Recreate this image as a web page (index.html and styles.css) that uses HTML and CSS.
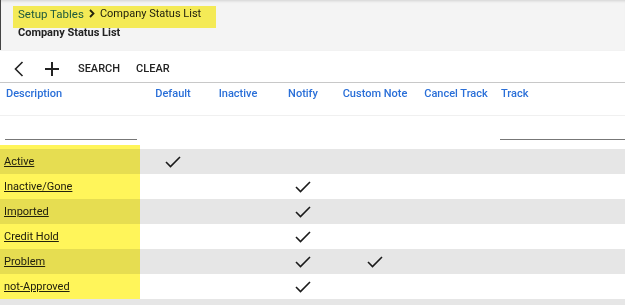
FILE: index.html
```html
<!DOCTYPE html>
<html lang="en">
<head>
    <meta charset="UTF-8">
    <meta name="viewport" content="width=device-width, initial-scale=1.0">
    <title>Company Status List</title>
    <link rel="stylesheet" href="styles.css">
</head>
<body>
    <div class="topbar">
        <div class="crumbs">
            <a href="#" class="crumb-link">Setup Tables</a>
            <svg class="crumb-sep" width="6" height="9" viewBox="0 0 6 9"><polyline points="1,1 4.5,4.5 1,8" fill="none" stroke="#222" stroke-width="1.8"/></svg>
            <span class="crumb-current">Company Status List</span>
        </div>
        <h1 class="title">Company Status List</h1>
        <span class="marker crumb-marker"></span>
    </div>

    <div class="toolbar">
        <button class="icon-btn" title="Back">
            <svg width="10" height="16" viewBox="0 0 10 16"><polyline points="8.5,1 1.5,8 8.5,15" fill="none" stroke="#222" stroke-width="1.6"/></svg>
        </button>
        <button class="icon-btn" title="Add">
            <svg width="14" height="14" viewBox="0 0 14 14"><path d="M7 0v14M0 7h14" stroke="#222" stroke-width="2"/></svg>
        </button>
        <button class="text-btn">Search</button>
        <button class="text-btn">Clear</button>
    </div>

    <div class="list">
        <div class="row head">
            <div class="cell left">Description</div>
            <div class="cell">Default</div>
            <div class="cell">Inactive</div>
            <div class="cell">Notify</div>
            <div class="cell">Custom Note</div>
            <div class="cell">Cancel Track</div>
            <div class="cell track">Track</div>
        </div>
        <div class="row filter">
            <div class="cell left"><input class="filter-input" type="text"></div>
            <div class="cell"></div>
            <div class="cell"></div>
            <div class="cell"></div>
            <div class="cell"></div>
            <div class="cell"></div>
            <div class="cell track"><input class="filter-input" type="text"></div>
        </div>

        <div class="row data odd">
            <div class="cell left"><a href="#">Active</a></div>
            <div class="cell"><svg class="check" viewBox="0 0 16 12"><polyline points="1,6 5.5,10.5 15,1"/></svg></div>
            <div class="cell"></div><div class="cell"></div><div class="cell"></div><div class="cell"></div><div class="cell"></div>
        </div>
        <div class="row data">
            <div class="cell left"><a href="#">Inactive/Gone</a></div>
            <div class="cell"></div><div class="cell"></div>
            <div class="cell"><svg class="check" viewBox="0 0 16 12"><polyline points="1,6 5.5,10.5 15,1"/></svg></div>
            <div class="cell"></div><div class="cell"></div><div class="cell"></div>
        </div>
        <div class="row data odd">
            <div class="cell left"><a href="#">Imported</a></div>
            <div class="cell"></div><div class="cell"></div>
            <div class="cell"><svg class="check" viewBox="0 0 16 12"><polyline points="1,6 5.5,10.5 15,1"/></svg></div>
            <div class="cell"></div><div class="cell"></div><div class="cell"></div>
        </div>
        <div class="row data">
            <div class="cell left"><a href="#">Credit Hold</a></div>
            <div class="cell"></div><div class="cell"></div>
            <div class="cell"><svg class="check" viewBox="0 0 16 12"><polyline points="1,6 5.5,10.5 15,1"/></svg></div>
            <div class="cell"></div><div class="cell"></div><div class="cell"></div>
        </div>
        <div class="row data odd">
            <div class="cell left"><a href="#">Problem</a></div>
            <div class="cell"></div><div class="cell"></div>
            <div class="cell"><svg class="check" viewBox="0 0 16 12"><polyline points="1,6 5.5,10.5 15,1"/></svg></div>
            <div class="cell"><svg class="check" viewBox="0 0 16 12"><polyline points="1,6 5.5,10.5 15,1"/></svg></div>
            <div class="cell"></div><div class="cell"></div>
        </div>
        <div class="row data">
            <div class="cell left"><a href="#">not-Approved</a></div>
            <div class="cell"></div><div class="cell"></div>
            <div class="cell"><svg class="check" viewBox="0 0 16 12"><polyline points="1,6 5.5,10.5 15,1"/></svg></div>
            <div class="cell"></div><div class="cell"></div><div class="cell"></div>
        </div>
        <div class="row data odd tail"></div>

        <span class="marker list-marker"></span>
    </div>
</body>
</html>
```

FILE: styles.css
```css
body {
    margin: 0;
    font-family: Roboto, 'Liberation Sans', sans-serif;
    color: #222;
    background: #fff;
    overflow: hidden;
}
.topbar {
    position: relative;
    height: 50px;
    background: #f4f4f4;
    border-left: 1px solid #444;
    box-shadow: inset 0 3px 3px -2px rgba(0, 0, 0, 0.15);
    box-sizing: border-box;
    padding: 7px 0 0 17px;
}
.crumbs {
    font-size: 11.5px;
    line-height: 14px;
    display: flex;
    align-items: center;
}
.crumb-link {
    color: #1f5fa8;
    text-decoration: none;
}
.crumb-sep {
    margin: 0 5px 1px 5px;
}
.crumb-current {
    font-size: 11px;
}
.title {
    margin: 5px 0 0 0;
    font-size: 11px;
    font-weight: 700;
    line-height: 14px;
}
.marker {
    position: absolute;
    background: #fff55a;
    mix-blend-mode: multiply;
    pointer-events: none;
}
.crumb-marker {
    left: 12px;
    top: 6px;
    width: 203px;
    height: 22px;
}
.toolbar {
    height: 27px;
    padding-top: 4px;
    border-top: 1px solid #f2f2f2;
    border-bottom: 1px solid #c8c8c8;
    display: flex;
    align-items: center;
    padding-left: 14px;
}
.icon-btn, .text-btn {
    background: none;
    border: none;
    padding: 0;
    cursor: pointer;
    font-family: inherit;
    color: #222;
}
.icon-btn {
    display: flex;
    align-items: center;
    justify-content: center;
    height: 20px;
    margin-right: 21px;
}
.icon-btn + .icon-btn {
    margin-right: 19px;
}
.text-btn {
    font-size: 11px;
    font-weight: 500;
    text-transform: uppercase;
    margin-right: 16px;
}
.list {
    position: relative;
}
.row {
    display: grid;
    grid-template-columns: 145px 56px 74px 56px 88px 74px 1fr;
}
.cell {
    display: flex;
    align-items: center;
    justify-content: center;
    overflow: hidden;
    white-space: nowrap;
}
.cell.left {
    justify-content: flex-start;
    padding-left: 4px;
}
.cell.track {
    justify-content: flex-start;
    padding-left: 8px;
}
.head {
    height: 32px;
    border-bottom: 1px solid #f0f0f0;
    font-size: 11px;
    font-weight: 500;
    color: #2a6fd8;
}
.head .cell {
    align-items: flex-start;
    padding-top: 4px;
    line-height: 14px;
}
.head .cell.left {
    padding-left: 6px;
}
.filter {
    height: 33px;
}
.filter .cell {
    align-items: flex-end;
    padding-bottom: 9px;
}
.filter .cell.left {
    padding-left: 5px;
}
.filter .cell.track {
    padding-left: 7px;
}
.filter-input {
    width: 100%;
    border: none;
    border-bottom: 1px solid #777;
    background: transparent;
    outline: none;
    height: 14px;
    padding: 0;
    margin-right: 8px;
}
.filter .cell.track .filter-input {
    margin-right: 0;
}
.data {
    height: 25px;
    font-size: 11px;
}
.data.odd {
    background: #e6e6e6;
}
.data.tail {
    height: 7px;
}
.data a {
    color: #222;
    text-decoration: underline;
}
.check {
    width: 16px;
    height: 12px;
    fill: none;
    stroke: #1a1a1a;
    stroke-width: 1.6;
}
.list-marker {
    left: 0;
    top: 62px;
    width: 140px;
    height: 154px;
}
```
